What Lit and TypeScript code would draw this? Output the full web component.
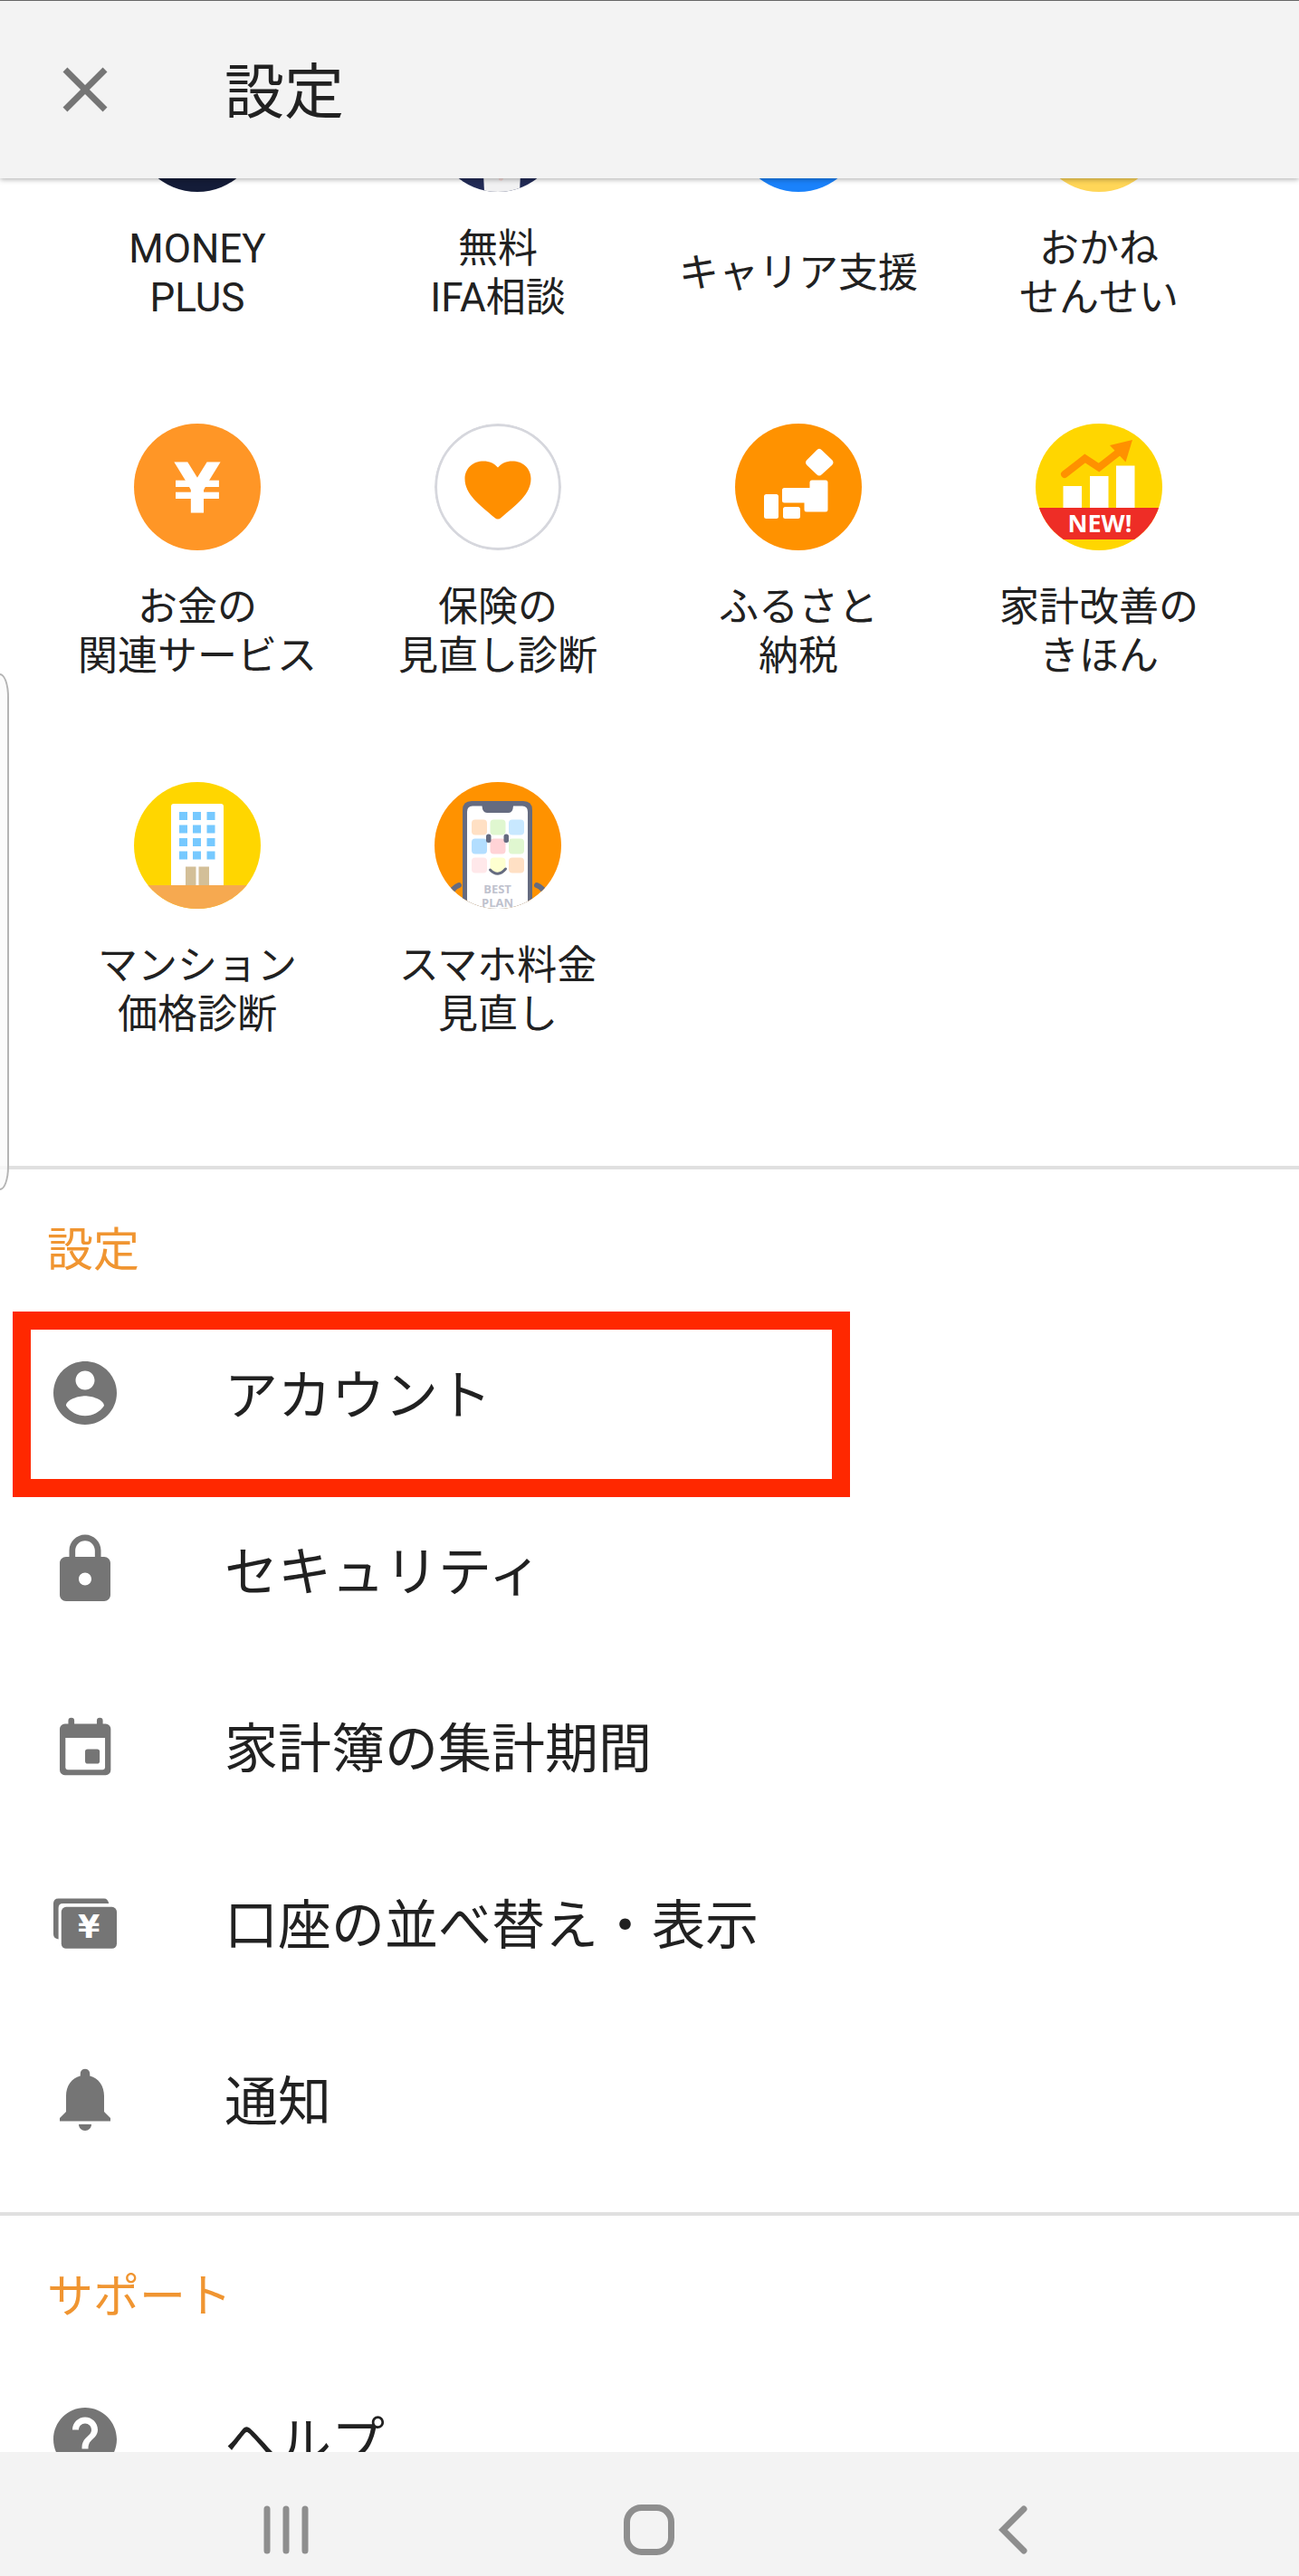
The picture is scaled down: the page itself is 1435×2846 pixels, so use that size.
/**
 * Settings screen: service shortcuts, settings list and system navigation
 */

import { LitElement, html, css, svg } from 'lit';
import type { SVGTemplateResult } from 'lit';
import { customElement, property } from 'lit/decorators.js';

interface Service {
  icon: string;
  lines: string[];
}

interface MenuItem {
  icon: string;
  label: string;
  highlighted?: boolean;
}

const SERVICES: Service[] = [
  { icon: 'moneyPlus', lines: ['MONEY', 'PLUS'] },
  { icon: 'ifa', lines: ['無料', 'IFA相談'] },
  { icon: 'career', lines: ['キャリア支援'] },
  { icon: 'sensei', lines: ['おかね', 'せんせい'] },
  { icon: 'yen', lines: ['お金の', '関連サービス'] },
  { icon: 'heart', lines: ['保険の', '見直し診断'] },
  { icon: 'furusato', lines: ['ふるさと', '納税'] },
  { icon: 'kakei', lines: ['家計改善の', 'きほん'] },
  { icon: 'mansion', lines: ['マンション', '価格診断'] },
  { icon: 'phone', lines: ['スマホ料金', '見直し'] },
];

const SETTINGS: MenuItem[] = [
  { icon: 'account', label: 'アカウント', highlighted: true },
  { icon: 'lock', label: 'セキュリティ' },
  { icon: 'calendar', label: '家計簿の集計期間' },
  { icon: 'wallet', label: '口座の並べ替え・表示' },
  { icon: 'bell', label: '通知' },
];

const SUPPORT: MenuItem[] = [{ icon: 'help', label: 'ヘルプ' }];

const PHONE_TILES = [
  ['#ffe0c4', '#e0f7d0', '#c8e8ff'],
  ['#b3deff', '#ffd3d6', '#e0f7d0'],
  ['#ffe8ea', '#feffd0', '#ffe0c4'],
];

// 140 x 140 artwork, clipped to a circle by the host element
const SERVICE_ART: Record<string, SVGTemplateResult> = {
  moneyPlus: svg`<rect width="140" height="140" fill="#141c38" />`,
  ifa: svg`
    <rect width="140" height="140" fill="#222b56" />
    <path d="M51 60H98L94 140H55Z" fill="#f1f1f2" />
    <path d="M72 110L76 126L74 128L71 127Z" fill="#f3d9d6" />
  `,
  career: svg`<rect width="140" height="140" fill="#1a82fb" />`,
  sensei: svg`<rect width="140" height="140" fill="#ffd658" />`,
  yen: svg`
    <rect width="140" height="140" fill="#ff9626" />
    <text class="yen" x="70" y="99" text-anchor="middle">¥</text>
  `,
  heart: svg`
    <circle cx="70" cy="70" r="68.5" fill="#fff" stroke="#d6d7dd" stroke-width="3" />
    <path
      d="M66.5 104C50 90 33.5 78 33.5 61C33.5 49 43 41.5 54 41.5C61 41.5 66 44 70 48.5C74 44 79 41.5 86 41.5C97 41.5 106.5 49 106.5 61C106.5 78 90 90 73.5 104Q70 107 66.5 104Z"
      fill="#ff8f00"
    />
  `,
  furusato: svg`
    <rect width="140" height="140" fill="#ff9200" />
    <g fill="#fff">
      <path d="M90 29.5Q93 26 96 29.5L107 40Q110 43 107 46L96 56Q93 59 90 56L79.500 46Q76.500 43 79.500 40Z" />
      <path d="M54.500 71H82.500V65Q82.500 62.500 85 62.500H100Q102.500 62.500 102.500 65V95Q102.500 97.500 100 97.500H79Q76.500 97.500 76.500 95V87.500H54.500Q52 87.500 52 85V73.500Q52 71 54.500 71Z" />
      <rect x="32" y="78" width="16" height="27" rx="2.500" />
      <rect x="53" y="92" width="19" height="13" rx="2.500" />
    </g>
  `,
  kakei: svg`
    <rect width="140" height="140" fill="#ffd600" />
    <path d="M30.500 69H51V94H30.500ZM60 58H80.500V94H60ZM89 46.500H109.500V94H89Z" fill="#fff" />
    <path d="M32 56L54.500 38.500L70 48.500L95 29" fill="none" stroke="#ff9100" stroke-width="8" stroke-linecap="round" />
    <path d="M107 18L82 24L99.500 42.500Z" fill="#ff9100" />
    <rect y="93" width="140" height="35" fill="#ee2d26" />
    <text class="new" x="71" y="120" text-anchor="middle">NEW!</text>
  `,
  mansion: svg`
    <rect width="140" height="140" fill="#ffd600" />
    <rect x="41" y="24" width="58" height="92" rx="3" fill="#fff" />
    ${[50, 65, 80.5].map(x =>
      [33, 47.5, 62, 76.5].map(y => svg`<rect x=${x} y=${y} width="9" height="9" fill="#76c9ff" />`)
    )}
    <path d="M57 93.500H68.500V115H57ZM71.500 93.500H83V115H71.500Z" fill="#d3bf98" />
    <rect y="114" width="140" height="26" fill="#f6a950" />
  `,
  phone: svg`
    <rect width="140" height="140" fill="#ff9200" />
    <g fill="none" stroke="#656b80" stroke-width="6" stroke-linecap="round">
      <path d="M27 114Q19 117 17 126" />
      <path d="M113 114Q121 117 123 126" />
    </g>
    <path d="M31 145V31Q31 21 41 21H98Q108 21 108 31V145Z" fill="#656b80" />
    <path d="M36 145V33Q36 26.500 42 26.500H52.500Q53 34 58 34H82Q86.500 34 87 26.500H97Q103 26.500 103 33V145Z" fill="#fff" />
    ${PHONE_TILES.map((row, r) =>
      row.map(
        (color, c) =>
          svg`<rect x=${41 + c * 20.5} y=${41.5 + r * 21} width="17" height="17" rx="4" fill=${color} />`
      )
    )}
    <g fill="#656b80">
      <rect x="57" y="57.500" width="5.500" height="9.500" rx="2.500" />
      <rect x="76.500" y="57.500" width="5.500" height="9.500" rx="2.500" />
    </g>
    <path d="M61.500 97Q70 106 78.500 96" fill="none" stroke="#656b80" stroke-width="3" stroke-linecap="round" />
    <text class="plan" x="69.500" y="123" text-anchor="middle">BEST</text>
    <text class="plan" x="69.500" y="137.500" text-anchor="middle">PLAN</text>
  `,
};

// 24 x 24 glyphs
const MENU_ART: Record<string, SVGTemplateResult> = {
  close: svg`<path d="M19 6.410L17.590 5 12 10.590 6.410 5 5 6.410 10.590 12 5 17.590 6.410 19 12 13.410 17.590 19 19 17.590 13.410 12z" />`,
  account: svg`<path d="M12 2C6.480 2 2 6.480 2 12s4.480 10 10 10 10-4.480 10-10S17.520 2 12 2zm0 3c1.660 0 3 1.340 3 3s-1.340 3-3 3-3-1.340-3-3 1.340-3 3-3zm0 14.200c-2.500 0-4.710-1.280-6-3.220.030-1.990 4-3.080 6-3.080 1.990 0 5.970 1.090 6 3.080-1.290 1.940-3.500 3.220-6 3.220z" />`,
  lock: svg`<path d="M18 8h-1V6c0-2.760-2.240-5-5-5S7 3.240 7 6v2H6c-1.100 0-2 .9-2 2v10c0 1.100.9 2 2 2h12c1.100 0 2-.9 2-2V10c0-1.100-.9-2-2-2zm-6 9c-1.100 0-2-.9-2-2s.9-2 2-2 2 .9 2 2-.9 2-2 2zM15.100 8H8.900V6c0-1.710 1.390-3.100 3.100-3.100s3.100 1.390 3.100 3.100v2z" />`,
  calendar: svg`
    <path d="M6.700 6V4a.95.95 0 0 1 1.900 0V5H15.700V4a.95.95 0 0 1 1.900 0V5H18.500A1.600 1.600 0 0 1 20.100 6.600V19.600A1.600 1.600 0 0 1 18.500 21.200H5.600A1.600 1.600 0 0 1 4 19.600V6.600A1.600 1.600 0 0 1 5.600 5H6.700ZM5.800 9.400V18.800Q5.800 19.500 6.500 19.500H17.600Q18.300 19.500 18.300 18.800V9.400Z" fill-rule="evenodd" />
    <rect x="12" y="13" width="4.600" height="4.600" rx=".8" />
  `,
  wallet: svg`
    <path d="M3.600 4.400H18Q19.200 4.400 19.500 6H5Q3.600 6 3.600 7.400V17.300Q2 17 2 15.700V6Q2 4.400 3.600 4.400Z" />
    <rect x="4.500" y="7.100" width="17.500" height="13.100" rx="1.500" />
    <text class="wallet-yen" x="13.200" y="16.900" text-anchor="middle">¥</text>
  `,
  bell: svg`<path d="M12 22c1.100 0 2-.9 2-2h-4c0 1.100.89 2 2 2zm6-6v-5c0-3.070-1.640-5.640-4.500-6.320V4c0-.83-.67-1.500-1.500-1.500s-1.500.67-1.500 1.500v.68C7.630 5.360 6 7.920 6 11v5l-2 2v1h16v-1l-2-2z" />`,
  help: svg`<path d="M12 2C6.480 2 2 6.480 2 12s4.480 10 10 10 10-4.480 10-10S17.520 2 12 2zm1 17h-2v-2h2v2zm2.070-7.750l-.9.920C13.450 12.900 13 13.500 13 15h-2v-.5c0-1.100.45-2.100 1.170-2.830l1.240-1.260c.37-.36.59-.86.59-1.410 0-1.100-.9-2-2-2s-2 .9-2 2H8c0-2.210 1.790-4 4-4s4 1.790 4 4c0 .88-.36 1.680-.930 2.250z" />`,
};

@customElement('service-tile')
export class ServiceTile extends LitElement {
  @property({ type: Object })
  service: Service | null = null;

  static styles = css`
    :host {
      display: block;
    }

    .tile {
      display: flex;
      flex-direction: column;
      align-items: center;
      gap: 36px;
      color: inherit;
      text-decoration: none;
    }

    .art {
      display: block;
      width: 140px;
      height: 140px;
      border-radius: 50%;
    }

    .label {
      display: flex;
      flex-direction: column;
      justify-content: center;
      min-height: 108px;
      font-size: 44px;
      line-height: 54px;
      text-align: center;
      white-space: nowrap;
    }

    .yen {
      font: 700 76px 'DejaVu Sans', sans-serif;
      fill: #fff;
    }

    .new {
      font: 700 27px 'Open Sans', sans-serif;
      fill: #fff;
    }

    .plan {
      font: 700 13px 'Open Sans', sans-serif;
      fill: #bfc2ce;
    }
  `;

  render() {
    if (!this.service) return html``;
    return html`
      <a class="tile" href="#">
        <svg class="art" viewBox="0 0 140 140" aria-hidden="true">
          ${SERVICE_ART[this.service.icon]}
        </svg>
        <span class="label">
          ${this.service.lines.map(line => html`<span>${line}</span>`)}
        </span>
      </a>
    `;
  }
}

@customElement('menu-section')
export class MenuSection extends LitElement {
  @property()
  heading = '';

  @property({ type: Array })
  items: MenuItem[] = [];

  static styles = css`
    :host {
      display: block;
      border-top: 4px solid #e0e0e0;
      padding-bottom: 28px;
    }

    .heading {
      margin: 0;
      padding: 52px 52px 21px;
      font-size: 51px;
      font-weight: 400;
      line-height: 76px;
      color: #f09531;
    }

    .list {
      margin: 0;
      padding: 0;
      list-style: none;
    }

    .item {
      position: relative;
    }

    .row {
      display: flex;
      align-items: center;
      gap: 112px;
      height: 195px;
      padding: 0 52px;
      color: inherit;
      font-size: 59px;
      line-height: 84px;
      text-decoration: none;
      white-space: nowrap;
    }

    .text {
      padding-top: 8px;
    }

    .icon {
      flex: none;
      width: 84px;
      height: 84px;
      fill: #757575;
    }

    .wallet-yen {
      font: 700 10px 'DejaVu Sans', sans-serif;
      fill: #fff;
    }

    /* marker drawn over the row, slightly taller than the row itself */
    .marker {
      position: absolute;
      top: 8px;
      left: 14px;
      width: 925px;
      height: 205px;
      max-width: calc(100% - 28px);
      box-sizing: border-box;
      border: 20px solid #ff2800;
      z-index: 1;
      pointer-events: none;
    }
  `;

  render() {
    return html`
      <h2 class="heading">${this.heading}</h2>
      <ul class="list">
        ${this.items.map(item => html`
          <li class="item">
            <a class="row" href="#">
              <svg class="icon" viewBox="0 0 24 24" aria-hidden="true">${MENU_ART[item.icon]}</svg>
              <span class="text">${item.label}</span>
            </a>
            ${item.highlighted ? html`<div class="marker"></div>` : ''}
          </li>
        `)}
      </ul>
    `;
  }
}

@customElement('app-root')
export class AppRoot extends LitElement {
  static styles = css`
    :host {
      position: relative;
      display: flex;
      flex-direction: column;
      height: 100vh;
      overflow: hidden;
      background: #fff;
      color: #212121;
      font-family: Roboto, 'Noto Sans CJK JP', sans-serif;
    }

    button {
      padding: 0;
      border: 0;
      background: none;
    }

    .header {
      position: relative;
      z-index: 2;
      flex: none;
      display: flex;
      align-items: center;
      gap: 112px;
      height: 196px;
      padding: 0 52px;
      border-top: 1px solid #666;
      background: #f3f3f3;
      box-shadow: 0 1px 6px rgba(0, 0, 0, 0.35);
    }

    .close,
    .close svg {
      display: block;
      width: 84px;
      height: 84px;
      fill: #757575;
    }

    .title {
      margin: 0;
      padding-top: 8px;
      font-size: 66px;
      font-weight: 400;
      line-height: 96px;
    }

    .content {
      flex: 1;
      min-height: 0;
      overflow: hidden;
    }

    /* the list is scrolled so that the first row sits partly under the header */
    .services {
      display: grid;
      grid-template-columns: repeat(4, 1fr);
      row-gap: 112px;
      margin-top: -125px;
      padding: 0 55px 140px 52px;
    }

    .edge-handle {
      position: absolute;
      z-index: 1;
      top: 744px;
      left: 0;
      width: 10px;
      height: 571px;
      box-sizing: border-box;
      border: 2px solid #b4b4b4;
      border-left: 0;
      border-radius: 0 10px 10px 0 / 0 26px 26px 0;
      background: rgba(250, 250, 250, 0.8);
    }

    .nav {
      position: relative;
      z-index: 2;
      flex: none;
      display: grid;
      grid-template-columns: repeat(3, 1fr);
      justify-items: center;
      padding: 54px 8% 19px;
      background: #f3f3f3;
    }

    .nav svg {
      display: block;
      width: 64px;
      height: 64px;
      fill: none;
      stroke: #8e8e8e;
      stroke-width: 7;
      stroke-linecap: round;
    }
  `;

  render() {
    return html`
      <header class="header">
        <button class="close" aria-label="閉じる">
          <svg viewBox="0 0 24 24" aria-hidden="true">${MENU_ART.close}</svg>
        </button>
        <h1 class="title">設定</h1>
      </header>

      <main class="content">
        <div class="services">
          ${SERVICES.map(service => html`<service-tile .service=${service}></service-tile>`)}
        </div>
        <menu-section heading="設定" .items=${SETTINGS}></menu-section>
        <menu-section heading="サポート" .items=${SUPPORT}></menu-section>
      </main>

      <div class="edge-handle"></div>

      <nav class="nav">
        <button aria-label="最近使ったアプリ">
          <svg viewBox="0 0 64 64"><path d="M11 9V55M32 9V55M53 9V55" /></svg>
        </button>
        <button aria-label="ホーム">
          <svg viewBox="0 0 64 64"><rect x="7.500" y="7.500" width="49" height="49" rx="16" /></svg>
        </button>
        <button aria-label="戻る">
          <svg viewBox="0 0 64 64"><path d="M44 9L21 32L44 55" /></svg>
        </button>
      </nav>
    `;
  }
}

declare global {
  interface HTMLElementTagNameMap {
    'app-root': AppRoot;
    'menu-section': MenuSection;
    'service-tile': ServiceTile;
  }
}
